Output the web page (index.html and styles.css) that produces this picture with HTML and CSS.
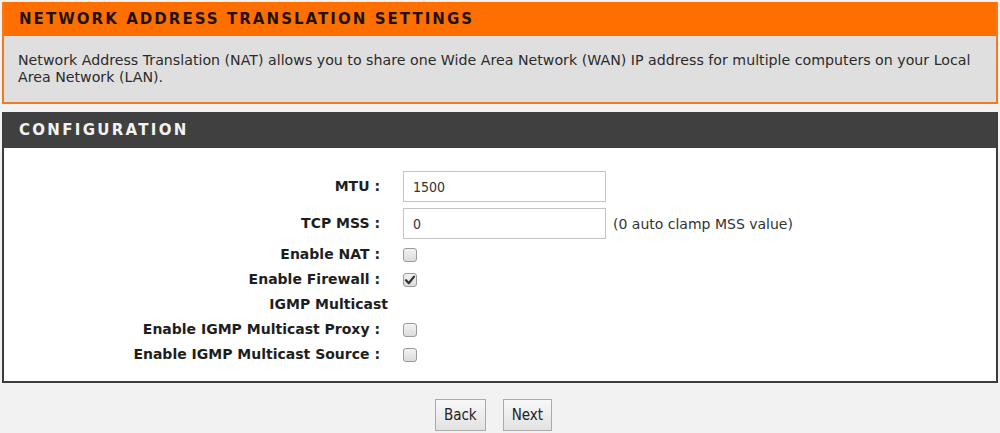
FILE: index.html
```html
<!DOCTYPE html>
<html>
<head>
<meta charset="utf-8">
<link rel="stylesheet" href="styles.css">
</head>
<body>
<div class="page">
  <section class="box box-orange">
    <h1 class="box-title">NETWORK ADDRESS TRANSLATION SETTINGS</h1>
    <p class="box-desc">Network Address Translation (NAT) allows you to share one Wide Area Network (WAN) IP address for multiple computers on your Local Area Network (LAN).</p>
  </section>
  <section class="box box-dark">
    <h2 class="box-title dark-title">CONFIGURATION</h2>
    <div class="form">
      <label class="lbl">MTU :</label>
      <div class="field"><input class="txt" type="text" value="1500"></div>
      <label class="lbl">TCP MSS :</label>
      <div class="field"><input class="txt" type="text" value="0"><span class="hint">(0 auto clamp MSS value)</span></div>
      <label class="lbl">Enable NAT :</label>
      <div class="field"><span class="cb"></span></div>
      <label class="lbl">Enable Firewall :</label>
      <div class="field"><span class="cb checked"><svg viewBox="0 0 14 14" width="14" height="14"><path d="M3 7.2 L5.8 10.2 L11 3.6" fill="none" stroke="#333" stroke-width="2.2" stroke-linecap="round" stroke-linejoin="round"/></svg></span></div>
      <div class="lbl sub">IGMP Multicast</div>
      <div class="field"></div>
      <label class="lbl">Enable IGMP Multicast Proxy :</label>
      <div class="field"><span class="cb"></span></div>
      <label class="lbl">Enable IGMP Multicast Source :</label>
      <div class="field"><span class="cb"></span></div>
    </div>
  </section>
  <div class="actions">
    <button class="btn" type="button">Back</button>
    <button class="btn" type="button">Next</button>
  </div>
</div>
</body>
</html>
```

FILE: styles.css
```css
* { box-sizing: border-box; }
html, body { margin: 0; padding: 0; }
body {
  background: #f2f2f2;
  font-family: "DejaVu Sans", Verdana, sans-serif;
  color: #222;
}
.page {
  width: 1000px;
  padding: 2px 2px 0 2px;
}
.box {
  margin: 0;
}
.box-orange {
  border: 2px solid #f47a1f;
  border-top: 0;
  background: #dfdfdf;
}
.box-title {
  margin: 0;
  height: 34px;
  line-height: 34px;
  padding-left: 15px;
  font-size: 15px;
  font-weight: bold;
  letter-spacing: 2.05px;
  background: #ff6f00;
  color: #1f1208;
}
.box-desc {
  margin: 0;
  padding: 16px 8px 16px 14px;
  font-family: "DejaVu Sans", sans-serif;
  font-size: 14.2px;
  line-height: 17px;
  color: #2b2b2b;
}
.box-dark {
  margin-top: 8px;
  border: 2px solid #3d3d3d;
  border-top: 0;
  background: #fff;
}
.dark-title {
  background: #404040;
  color: #f2f2f2;
  height: 36px;
  line-height: 36px;
  letter-spacing: 2.3px;
}
.form {
  display: grid;
  grid-template-columns: 376px 1fr;
  column-gap: 23px;
  padding: 20px 0 14px 0;
  align-items: center;
}
.lbl {
  text-align: right;
  font-family: "DejaVu Sans", sans-serif;
  font-weight: bold;
  font-size: 14px;
  color: #1e1e1e;
  line-height: 25px;
}
.lbl.sub {
  margin-right: -8px;
}
.field {
  display: flex;
  align-items: center;
  min-height: 25px;
}
.txt {
  width: 203px;
  height: 31px;
  border: 1px solid #c4c4c4;
  background: #fff;
  padding: 0 9px;
  font-family: "DejaVu Sans Condensed", "DejaVu Sans", sans-serif;
  font-size: 14px;
  color: #333;
  margin: 3px 0;
}
.hint {
  margin-left: 7px;
  font-family: "DejaVu Sans", sans-serif;
  font-size: 14px;
  color: #333;
}
.cb {
  display: inline-block;
  width: 14px;
  height: 14px;
  border: 1px solid #9a9a9a;
  border-radius: 3px;
  background: linear-gradient(#f2f2f2, #dcdcdc);
  position: relative;
}
.cb svg {
  position: absolute;
  left: -1px;
  top: -1px;
}
.actions {
  display: flex;
  justify-content: center;
  gap: 17px;
  padding-top: 16px;
  padding-right: 13px;
}
.btn {
  height: 32px;
  padding: 0 8px;
  border: 1px solid #aaa;
  background: linear-gradient(#f8f8f8, #e2e2e2);
  font-family: "DejaVu Sans Condensed", "DejaVu Sans", sans-serif;
  font-size: 15px;
  color: #222;
}
```
